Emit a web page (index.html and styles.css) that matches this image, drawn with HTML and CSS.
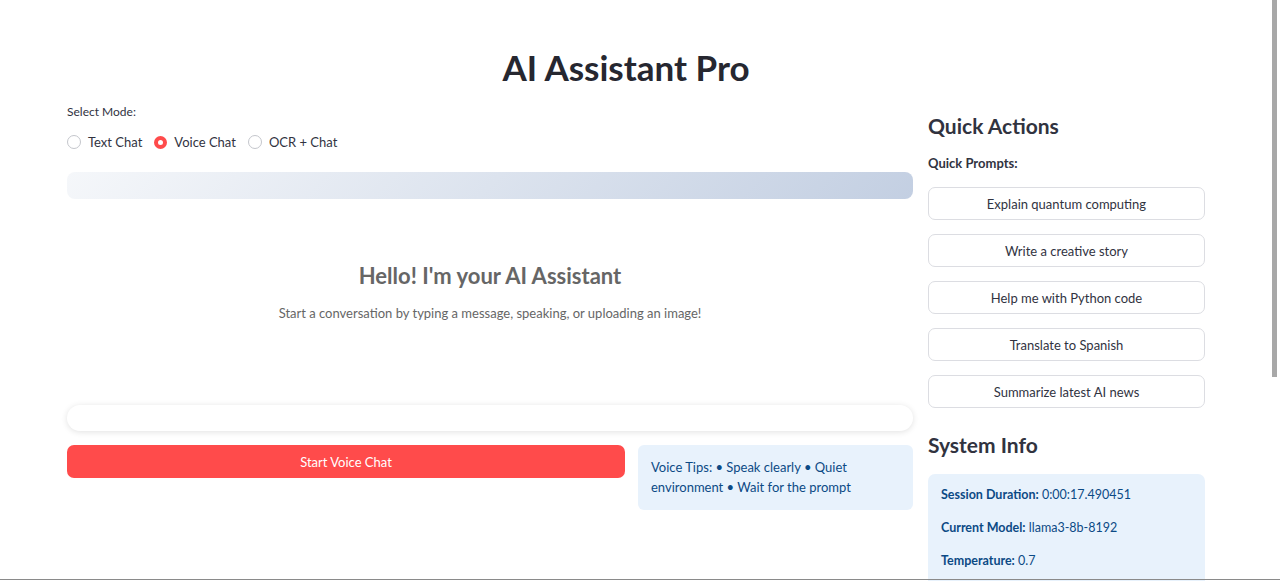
FILE: index.html
```html
<!DOCTYPE html>
<html lang="en">
<head>
<meta charset="utf-8">
<title>AI Assistant Pro</title>
<link rel="stylesheet" href="styles.css">
</head>
<body>
<div class="page">
  <h1 class="title">AI Assistant Pro</h1>
  <div class="columns">
    <main class="main">
      <div class="mode-label">Select Mode:</div>
      <div class="radios">
        <label class="radio"><span class="dot"></span>Text Chat</label>
        <label class="radio"><span class="dot on"></span>Voice Chat</label>
        <label class="radio"><span class="dot"></span>OCR + Chat</label>
      </div>
      <div class="gradient-bar"></div>
      <div class="welcome">
        <h2 class="hello">Hello! I'm your AI Assistant</h2>
        <p class="sub">Start a conversation by typing a message, speaking, or uploading an image!</p>
      </div>
      <div class="input-bar"></div>
      <div class="voice-row">
        <button class="voice-btn">Start Voice Chat</button>
        <div class="tips">Voice Tips: • Speak clearly • Quiet environment • Wait for the prompt</div>
      </div>
    </main>
    <aside class="side">
      <h3 class="side-title">Quick Actions</h3>
      <div class="prompts-label">Quick Prompts:</div>
      <div class="prompts">
        <button class="prompt">Explain quantum computing</button>
        <button class="prompt">Write a creative story</button>
        <button class="prompt">Help me with Python code</button>
        <button class="prompt">Translate to Spanish</button>
        <button class="prompt">Summarize latest AI news</button>
      </div>
      <h3 class="side-title sys">System Info</h3>
      <div class="info">
        <p><b>Session Duration:</b> 0:00:17.490451</p>
        <p><b>Current Model:</b> llama3-8b-8192</p>
        <p><b>Temperature:</b> 0.7</p>
      </div>
    </aside>
  </div>
</div>
<div class="scroll-thumb"></div>
<div class="bottom-line"></div>
</body>
</html>
```
FILE: styles.css
```css
html, body {
  margin: 0;
  padding: 0;
  height: 100%;
  overflow: hidden;
  background: #ffffff;
}
body {
  font-family: "Lato", "Liberation Sans", sans-serif;
  color: #31333f;
}
.page {
  padding: 44px 75px 0 67px;
}
.title {
  margin: 0;
  text-align: center;
  font-size: 35px;
  line-height: 46px;
  font-weight: 700;
  color: #262730;
  padding-right: 20px;
}
.columns {
  display: flex;
  gap: 15px;
  margin-top: 14px;
}
.main {
  width: 846px;
  flex: none;
}
.side {
  width: 277px;
  flex: none;
}
.mode-label {
  font-size: 12px;
  line-height: 16px;
  color: #31333f;
}
.radios {
  display: flex;
  gap: 12px;
  margin-top: 12px;
  height: 20px;
  align-items: center;
}
.radio {
  display: flex;
  align-items: center;
  font-size: 13px;
  color: #31333f;
}
.dot {
  width: 12px;
  height: 12px;
  border: 1px solid #c4c6cc;
  border-radius: 50%;
  margin-right: 7px;
  box-sizing: content-box;
  background: #fff;
}
.dot.on {
  width: 5px;
  height: 5px;
  border: 4.5px solid #ff4b4b;
}
.gradient-bar {
  margin-top: 20px;
  height: 27px;
  border-radius: 8px;
  background: linear-gradient(135deg, #f5f7fa 0%, #c3cfe2 100%);
}
.welcome {
  height: 206px;
  text-align: center;
  padding-top: 62px;
  box-sizing: border-box;
}
.hello {
  margin: 0;
  font-size: 22px;
  line-height: 30px;
  font-weight: 700;
  color: #666666;
}
.sub {
  margin: 13px 0 0;
  font-size: 13px;
  line-height: 18px;
  color: #666666;
}
.input-bar {
  height: 26px;
  border-radius: 13px;
  background: #fff;
  box-shadow: 0 1px 6px rgba(0, 0, 0, 0.12);
}
.voice-row {
  display: flex;
  gap: 13px;
  margin-top: 14px;
  align-items: flex-start;
}
.voice-btn {
  width: 558px;
  height: 33px;
  border: none;
  border-radius: 7px;
  background: #ff4b4b;
  color: #fff;
  font-family: inherit;
  font-size: 13px;
}
.tips {
  flex: 1;
  background: #e8f2fc;
  border-radius: 6px;
  color: #0c4a85;
  font-size: 13px;
  line-height: 20px;
  padding: 12px 13px 13px;
}
.side-title {
  margin: 7px 0 0;
  font-size: 21px;
  line-height: 30px;
  font-weight: 700;
  color: #31333f;
}
.prompts-label {
  margin-top: 13px;
  font-size: 13px;
  line-height: 18px;
  font-weight: 700;
}
.prompts {
  display: flex;
  flex-direction: column;
  gap: 14px;
  margin-top: 15px;
}
.prompt {
  height: 33px;
  border: 1px solid #dcdde2;
  border-radius: 7px;
  background: #fff;
  color: #31333f;
  font-family: inherit;
  font-size: 13px;
}
.side-title.sys {
  margin-top: 22px;
}
.info {
  margin-top: 14px;
  background: #e8f2fc;
  border-radius: 7px;
  padding: 12px 13px 40px;
  color: #0c4a85;
  font-size: 12.5px;
}
.info p {
  margin: 0 0 15px;
  line-height: 18px;
}
.scroll-thumb {
  position: fixed;
  top: 0;
  right: 3px;
  width: 5px;
  height: 377px;
  background: #a8a8a8;
}
.bottom-line {
  position: fixed;
  left: 0;
  right: 0;
  bottom: 1px;
  height: 1px;
  background: #8a8a8a;
}
```
